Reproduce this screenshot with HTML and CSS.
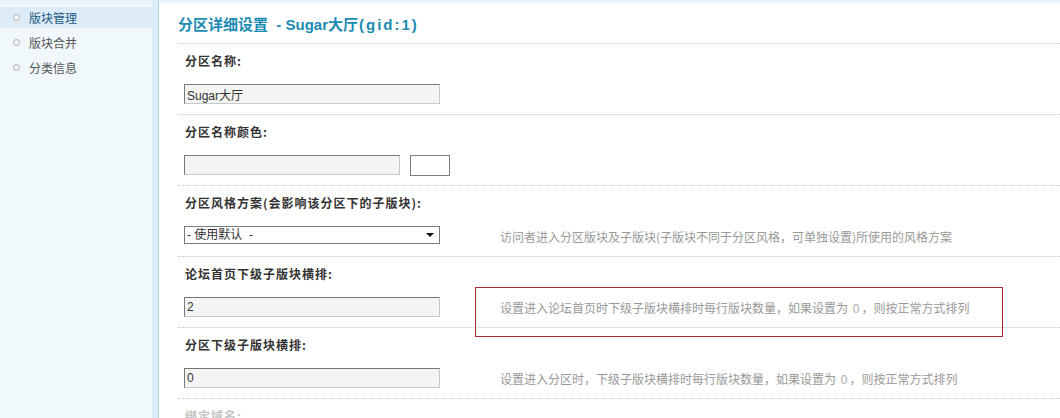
FILE: index.html
```html
<!DOCTYPE html>
<html lang="zh-CN">
<head>
<meta charset="utf-8">
<title>分区详细设置</title>
<link rel="stylesheet" href="styles.css">
</head>
<body>
<div class="page">
  <aside class="sidebar">
    <ul class="menu">
      <li class="menu-item active"><span class="dot"></span>版块管理</li>
      <li class="menu-item"><span class="dot"></span>版块合并</li>
      <li class="menu-item"><span class="dot"></span>分类信息</li>
    </ul>
  </aside>
  <main class="main">
    <h3 class="title">分区详细设置&nbsp;&nbsp;- Sugar大厅<span class="gid">(gid:1)</span></h3>

    <section class="field">
      <div class="label">分区名称:</div>
      <div class="row">
        <div class="control"><input class="txt" type="text" value="Sugar大厅"></div>
      </div>
    </section>

    <section class="field">
      <div class="label">分区名称颜色:</div>
      <div class="row">
        <div class="control color-control">
          <input class="txt txt-color" type="text" value="">
          <span class="color-box"></span>
        </div>
      </div>
    </section>

    <section class="field">
      <div class="label">分区风格方案(会影响该分区下的子版块):</div>
      <div class="row">
        <div class="control">
          <div class="select-wrap">
            <select class="select"><option>- 使用默认&nbsp; -</option></select>
            <span class="arrow"></span>
          </div>
        </div>
        <div class="tips">访问者进入分区版块及子版块(子版块不同于分区风格，可单独设置)所使用的风格方案</div>
      </div>
    </section>

    <section class="field field-marked">
      <div class="label">论坛首页下级子版块横排:</div>
      <div class="row">
        <div class="control"><input class="txt" type="text" value="2"></div>
        <div class="tips">设置进入论坛首页时下级子版块横排时每行版块数量，如果设置为 <span class="num">0</span>，则按正常方式排列</div>
      </div>
      <div class="mark"></div>
    </section>

    <section class="field">
      <div class="label">分区下级子版块横排:</div>
      <div class="row">
        <div class="control"><input class="txt" type="text" value="0"></div>
        <div class="tips">设置进入分区时，下级子版块横排时每行版块数量，如果设置为 <span class="num">0</span>，则按正常方式排列</div>
      </div>
    </section>

    <section class="field field-last">
      <div class="label label-faded">绑定域名:</div>
    </section>
  </main>
</div>
</body>
</html>
```

FILE: styles.css
```css
* { box-sizing: border-box; }

html, body {
  margin: 0;
  padding: 0;
  height: 100%;
  overflow: hidden;
}

body {
  font-family: "Liberation Sans", "Noto Sans CJK SC", sans-serif;
  font-size: 12px;
  color: #333;
  background: #fff;
}

.page {
  display: flex;
  height: 418px;
}

/* ---------- sidebar ---------- */
.sidebar {
  width: 158px;
  flex: none;
  background: linear-gradient(#e4eef5, #f0f8fc 6px);
  border-right: 6px solid #dcedf7;
  box-shadow: 1px 0 0 #b9d4e3;
}

.menu {
  list-style: none;
  margin: 0;
  padding: 7px 0 0;
}

.menu-item {
  display: flex;
  align-items: center;
  height: 21px;
  margin-bottom: 4px;
  padding-left: 13px;
  color: #555;
  font-family: "Noto Sans CJK SC", sans-serif;
  font-size: 12px;
}

.menu-item.active {
  background: #dcebf5;
  color: #1d5a85;
}

.dot {
  width: 7px;
  height: 7px;
  border: 1px solid #adadad;
  border-radius: 50%;
  background: #f4f4f4;
  margin-right: 9px;
}

/* ---------- main ---------- */
.main {
  flex: 1;
  margin-left: 1px;
  padding-left: 19px;
  background: linear-gradient(#e8f1f8, #fff 6px);
}

.title {
  margin: 0;
  padding: 14px 0 0 0;
  height: 44px;
  line-height: 22px;
  font-size: 15px;
  font-weight: bold;
  color: #1b8bb4;
  border-bottom: 1px dotted #c9c9c9;
  font-family: "Liberation Sans", "Noto Sans CJK SC", sans-serif;
}

.gid {
  letter-spacing: 2px;
  margin-left: 1px;
}

.field {
  position: relative;
  height: 71px;
  border-bottom: 1px dotted #c9c9c9;
}

.field-last { border-bottom: none; }

.label {
  padding: 9px 0 0 7px;
  line-height: 16px;
  font-weight: bold;
  color: #333;
  letter-spacing: 1px;
  font-family: "Noto Sans CJK SC", sans-serif;
  font-size: 12px;
}

.label-faded { color: #c4c4c4; }

.row {
  display: flex;
  align-items: center;
  margin-top: 15px;
  height: 20px;
}

.control {
  width: 322px;
  flex: none;
  padding-left: 6px;
  align-self: flex-start;
  display: flex;
}

.color-control { gap: 10px; }

.txt {
  width: 256px;
  height: 20px;
  margin: 0;
  padding: 0 2px;
  border: 1px solid #c8c8c8;
  border-top-color: #777;
  border-left-color: #777;
  background: #f4f4f4;
  font-family: "Liberation Sans", "Noto Sans CJK SC", sans-serif;
  font-size: 12px;
  color: #333;
  outline: none;
}

.txt-color { width: 216px; }

.color-box {
  width: 40px;
  height: 21px;
  border: 1px solid #7d7d7d;
  background: #fff;
}

.select-wrap {
  position: relative;
  width: 256px;
  height: 18px;
}

.select {
  appearance: none;
  -webkit-appearance: none;
  width: 256px;
  height: 18px;
  margin: 0;
  padding: 0 2px;
  border: 1px solid #7a7a7a;
  border-radius: 0;
  background: #fff;
  font-family: "Liberation Sans", "Noto Sans CJK SC", sans-serif;
  font-size: 12px;
  color: #333;
}

.arrow {
  position: absolute;
  right: 6px;
  top: 7px;
  width: 0;
  height: 0;
  border-left: 4px solid transparent;
  border-right: 4px solid transparent;
  border-top: 4px solid #111;
  pointer-events: none;
}

.tips {
  color: #999;
  font-family: "Noto Sans CJK SC", sans-serif;
  font-size: 12px;
  white-space: nowrap;
}

.num {
  color: #aaa;
  font-family: "Liberation Sans", sans-serif;
  padding: 0 2px;
}

.mark {
  position: absolute;
  left: 297px;
  top: 30px;
  width: 528px;
  height: 50px;
  border: 1px solid #a8292b;
  pointer-events: none;
}
```
